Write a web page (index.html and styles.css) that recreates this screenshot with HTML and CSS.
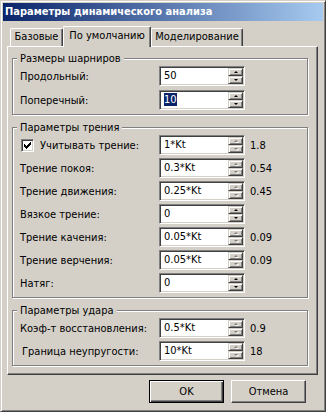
FILE: index.html
```html
<!DOCTYPE html>
<html lang="ru">
<head>
  <meta charset="UTF-8">
  <title>Параметры динамического анализа</title>
  <link rel="stylesheet" href="styles.css">
</head>
<body>
  <div class="window">
    <div class="titlebar">Параметры динамического анализа</div>

    <div class="tabs">
      <div class="tab tab-base">Базовые</div>
      <div class="tab tab-active">По умолчанию</div>
      <div class="tab tab-model">Моделирование</div>
    </div>

    <div class="panel">
      <fieldset class="group">
        <legend>Размеры шарниров</legend>
        <div class="rows rows-wide">
          <div class="row">
            <span class="lbl">Продольный:</span>
            <div class="spin"><span class="val">50</span>
              <div class="arrows"><span class="btn up"></span><span class="btn dn"></span></div>
            </div>
          </div>
          <div class="row">
            <span class="lbl">Поперечный:</span>
            <div class="spin"><span class="val"><span class="sel">10</span></span>
              <div class="arrows"><span class="btn up"></span><span class="btn dn"></span></div>
            </div>
          </div>
        </div>
      </fieldset>

      <fieldset class="group">
        <legend>Параметры трения</legend>
        <div class="rows">
          <div class="row">
            <label class="lbl check-lbl"><span class="checkbox"><svg width="7" height="7" viewBox="0 0 7 7"><path d="M0 2h1v1h1v1h1V3h1V2h1V1h1V0h1v3H6v1H5v1H4v1H3v1H2V6H1V5H0z" fill="#000"/></svg></span>Учитывать трение:</label>
            <div class="spin"><span class="val">1*Kt</span>
              <div class="arrows off"><span class="btn up"></span><span class="btn dn"></span></div>
            </div>
            <span class="res">1.8</span>
          </div>
          <div class="row">
            <span class="lbl">Трение покоя:</span>
            <div class="spin"><span class="val">0.3*Kt</span>
              <div class="arrows off"><span class="btn up"></span><span class="btn dn"></span></div>
            </div>
            <span class="res">0.54</span>
          </div>
          <div class="row">
            <span class="lbl">Трение движения:</span>
            <div class="spin"><span class="val">0.25*Kt</span>
              <div class="arrows off"><span class="btn up"></span><span class="btn dn"></span></div>
            </div>
            <span class="res">0.45</span>
          </div>
          <div class="row">
            <span class="lbl">Вязкое трение:</span>
            <div class="spin"><span class="val">0</span>
              <div class="arrows"><span class="btn up"></span><span class="btn dn"></span></div>
            </div>
          </div>
          <div class="row">
            <span class="lbl">Трение качения:</span>
            <div class="spin"><span class="val">0.05*Kt</span>
              <div class="arrows off"><span class="btn up"></span><span class="btn dn"></span></div>
            </div>
            <span class="res">0.09</span>
          </div>
          <div class="row">
            <span class="lbl">Трение верчения:</span>
            <div class="spin"><span class="val">0.05*Kt</span>
              <div class="arrows off"><span class="btn up"></span><span class="btn dn"></span></div>
            </div>
            <span class="res">0.09</span>
          </div>
          <div class="row">
            <span class="lbl">Натяг:</span>
            <div class="spin"><span class="val">0</span>
              <div class="arrows"><span class="btn up"></span><span class="btn dn"></span></div>
            </div>
          </div>
        </div>
      </fieldset>

      <fieldset class="group">
        <legend>Параметры удара</legend>
        <div class="rows">
          <div class="row">
            <span class="lbl">Коэф-т восстановления:</span>
            <div class="spin"><span class="val">0.5*Kt</span>
              <div class="arrows off"><span class="btn up"></span><span class="btn dn"></span></div>
            </div>
            <span class="res">0.9</span>
          </div>
          <div class="row">
            <span class="lbl lbl-shift">Граница неупругости:</span>
            <div class="spin"><span class="val">10*Kt</span>
              <div class="arrows off"><span class="btn up"></span><span class="btn dn"></span></div>
            </div>
            <span class="res">18</span>
          </div>
        </div>
      </fieldset>
    </div>

    <div class="actions">
      <button class="button default">OK</button>
      <button class="button">Отмена</button>
    </div>
  </div>
</body>
</html>
```

FILE: styles.css
```css
body {
  margin: 0;
  background-color: #d4d0c8;
  font-family: Tahoma, "DejaVu Sans Condensed", "Liberation Sans", sans-serif;
  font-size: 11px;
  color: #000;
}
.window {
  width: 326px;
  height: 412px;
  box-sizing: border-box;
  border: 1px solid;
  border-color: #d4d0c8 #404040 #404040 #d4d0c8;
  box-shadow: inset 1px 1px #fff, inset -1px -1px #808080;
  padding: 2px;
}
.titlebar {
  height: 18px;
  line-height: 18px;
  padding-left: 2px;
  color: #fff;
  font-weight: bold;
  background: linear-gradient(to right, #0a246a, #a6caf0);
}

/* tabs */
.tabs {
  display: flex;
  align-items: flex-end;
  height: 20px;
  margin: 5px 0 0 7px;
}
.tab {
  box-sizing: border-box;
  height: 18px;
  line-height: 16px;
  text-align: center;
  border: 1px solid;
  border-bottom: none;
  border-color: #fff #404040 #404040 #fff;
  border-radius: 2px 2px 0 0;
  box-shadow: inset -1px 0 #808080;
}
.tab-base { width: 53px; }
.tab-active {
  width: 88px;
  height: 21px;
  line-height: 18px;
  margin-bottom: -1px;
  position: relative;
  z-index: 1;
  background-color: #d4d0c8;
}
.tab-model { width: 92px; }

.panel {
  width: 311px;
  margin-left: 4px;
  box-sizing: border-box;
  border: 1px solid;
  border-color: #fff #404040 #404040 #fff;
  box-shadow: inset -1px -1px #808080;
  padding: 5px 9px 8px 4px;
}

/* group boxes */
.group {
  margin: 6px 0 0;
  padding: 1px 6px 4px 7px;
  border: 1px solid #808080;
  box-shadow: inset 1px 1px #fff, 1px 1px #fff;
}
.group:first-child {
  margin-top: 0;
}
.group legend {
  margin-left: -3px;
  padding: 0 3px;
  line-height: 13px;
  background-color: #d4d0c8;
}
.rows {
  display: flex;
  flex-direction: column;
  gap: 3px;
}
.rows-wide {
  gap: 4px;
}
.row {
  display: flex;
  align-items: center;
  height: 20px;
}
.lbl {
  width: 139px;
  flex-shrink: 0;
}
.lbl-shift {
  padding-left: 2px;
  width: 137px;
}
.check-lbl {
  display: flex;
  align-items: center;
}
.checkbox {
  width: 13px;
  height: 13px;
  box-sizing: border-box;
  margin: 0 6px 0 1px;
  border: 1px solid;
  border-color: #808080 #fff #fff #808080;
  box-shadow: inset 1px 1px #404040, inset -1px -1px #d4d0c8;
  background-color: #fff;
  display: flex;
  align-items: center;
  justify-content: center;
}
.checkbox svg {
  display: block;
}

/* spin edit */
.spin {
  width: 86px;
  height: 20px;
  flex-shrink: 0;
  box-sizing: border-box;
  border: 1px solid;
  border-color: #808080 #fff #fff #808080;
  box-shadow: inset 1px 1px #404040, inset -1px -1px #d4d0c8;
  background-color: #fff;
  padding: 1px;
  display: flex;
  align-items: stretch;
}
.val {
  flex: 1;
  padding-left: 3px;
  line-height: 16px;
}
.sel {
  background-color: #0a246a;
  color: #fff;
}
.arrows {
  width: 15px;
  display: flex;
  flex-direction: column;
}
.btn {
  flex: 1;
  box-sizing: border-box;
  background-color: #d4d0c8;
  border: 1px solid;
  border-color: #d4d0c8 #404040 #404040 #d4d0c8;
  box-shadow: inset 1px 1px #fff, inset -1px -1px #808080;
  display: flex;
  align-items: center;
  justify-content: center;
}
.btn::before {
  content: "";
  width: 0;
  height: 0;
  border-left: 2px solid transparent;
  border-right: 2px solid transparent;
}
.up::before {
  border-bottom: 2px solid #000;
}
.dn::before {
  border-top: 2px solid #000;
}
.off .up::before {
  border-bottom-color: #808080;
  filter: drop-shadow(1px 1px 0 #fff);
}
.off .dn::before {
  border-top-color: #808080;
  filter: drop-shadow(1px 1px 0 #fff);
}
.res {
  margin-left: 5px;
}

/* dialog buttons */
.actions {
  display: flex;
  justify-content: flex-end;
  gap: 7px;
  margin: 5px 17px 0 0;
}
.button {
  width: 75px;
  height: 23px;
  padding: 0;
  font-family: inherit;
  font-size: 11px;
  color: #000;
  background-color: #d4d0c8;
  border: 1px solid;
  border-color: #fff #404040 #404040 #fff;
  box-shadow: inset -1px -1px #808080;
}
.default {
  border-color: #000;
  box-shadow: inset 1px 1px #fff, inset -1px -1px #404040, inset -2px -2px #808080;
}
```
